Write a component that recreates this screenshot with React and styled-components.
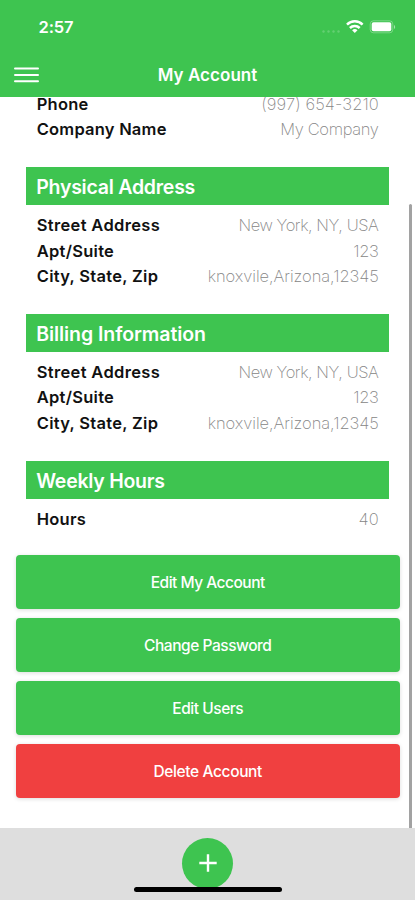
import React from "react";
import styled, { createGlobalStyle } from "styled-components";

const GREEN = "#3ec450";
const RED = "#f04040";

const GlobalStyle = createGlobalStyle`
  * { box-sizing: border-box; }
  body {
    margin: 0;
    background: #fff;
    font-family: Inter, "Liberation Sans", sans-serif;
  }
`;

const Screen = styled.div`
  display: flex;
  flex-direction: column;
  width: 415px;
  height: 900px;
  overflow: hidden;
  background: #fff;
`;

const Header = styled.header`
  flex: none;
  height: 97px;
  background: ${GREEN};
  color: #fff;
  z-index: 1;
`;

const StatusBar = styled.div`
  display: flex;
  align-items: center;
  justify-content: space-between;
  height: 52px;
  padding: 2px 19px 0 38.5px;
`;

const Time = styled.span`
  font-size: 16.5px;
  font-weight: 600;
  letter-spacing: -0.1px;
`;

const StatusIcons = styled.div`
  display: flex;
  align-items: center;
`;

const NavBar = styled.div`
  display: grid;
  grid-template-columns: 54px 1fr 54px;
  align-items: center;
  height: 45px;
`;

const MenuButton = styled.button`
  display: flex;
  padding: 0 0 0 14px;
  border: 0;
  background: none;
`;

const Title = styled.h1`
  margin: 0;
  text-align: center;
  font-size: 17px;
  font-weight: 600;
  line-height: 24px;
  letter-spacing: 0.05px;
`;

const Viewport = styled.main`
  flex: 1;
  min-height: 0;
  display: flex;
  overflow: hidden;
`;

const Content = styled.div`
  flex: 1;
  margin-top: -6.1px;
  padding-left: 15.5px;
  padding-right: 9px;
`;

const ScrollThumb = styled.div`
  flex: none;
  width: 3px;
  margin: 107px 3px 0 0;
  border-radius: 2px 2px 0 0;
  background: #a2a2a2;
`;

const Section = styled.section`
  margin: 0 10.7px 25.4px;
`;

const SectionTitle = styled.h2`
  display: flex;
  align-items: center;
  height: 37.5px;
  margin: 0 0 7.5px;
  padding: 2px 10px 0;
  background: ${GREEN};
  color: #fff;
  font-size: 19.5px;
  font-weight: 600;
  letter-spacing: ${(p) => p.$track}px;
`;

const Row = styled.div`
  display: flex;
  align-items: center;
  justify-content: space-between;
  height: 25.5px;
  padding: 0 10.5px;
  white-space: nowrap;
`;

const Label = styled.span`
  color: #111;
  font-size: 16.5px;
  font-weight: 600;
  letter-spacing: ${(p) => p.$track}px;
`;

const Value = styled.span`
  color: #868686;
  font-size: 16.5px;
  font-weight: 200;
  letter-spacing: ${(p) => p.$track}px;
  margin-right: ${(p) => -p.$track}px;
`;

const Actions = styled.div`
  display: flex;
  flex-direction: column;
  gap: 9.2px;
  margin-top: -1.8px;
`;

const ActionButton = styled.button`
  height: 53.8px;
  padding: 0;
  border: 0;
  border-radius: 4px;
  background: ${(p) => (p.$danger ? RED : GREEN)};
  box-shadow: 0 1px 4px rgba(0, 0, 0, 0.14);
  color: #fff;
  font-family: inherit;
  font-size: 15.5px;
  font-weight: 500;
  letter-spacing: ${(p) => p.$track}px;
`;

const Footer = styled.footer`
  flex: none;
  display: flex;
  flex-direction: column;
  align-items: center;
  height: 72px;
  padding-top: 9.5px;
  background: #dedede;
`;

const AddButton = styled.button`
  display: flex;
  align-items: center;
  justify-content: center;
  width: 51px;
  height: 51px;
  padding: 0;
  border: 0;
  border-radius: 50%;
  background: ${GREEN};
`;

const HomeIndicator = styled.div`
  width: 148px;
  height: 5px;
  margin-top: -2px;
  border-radius: 3px;
  background: #000;
  z-index: 1;
`;

const addressRows = [
  ["Street Address", "New York, NY, USA", 0.34, -0.45],
  ["Apt/Suite", "123", 0.28, -0.4],
  ["City, State, Zip", "knoxvile,Arizona,12345", 0.3, -0.06],
];

const sections = [
  {
    rows: [
      ["Phone", "(997) 654-3210", 0.25, 0.1],
      ["Company Name", "My Company", 0.22, -0.35],
    ],
  },
  { title: "Physical Address", track: -0.24, rows: addressRows },
  { title: "Billing Information", track: -0.07, rows: addressRows },
  { title: "Weekly Hours", track: -0.25, rows: [["Hours", "40", 0.25, 0.3]] },
];

const actions = [
  { text: "Edit My Account", track: -0.5 },
  { text: "Change Password", track: -0.45 },
  { text: "Edit Users", track: -0.45 },
  { text: "Delete Account", track: -0.38, danger: true },
];

function StatusGlyphs() {
  return (
    <StatusIcons>
      <svg width="76" height="16" viewBox="320 19 76 16" fill="none">
        <g fill="#fff" fillOpacity="0.2">
          <circle cx="323.5" cy="31.5" r="1.2" />
          <circle cx="328.5" cy="31.5" r="1.2" />
          <circle cx="333.5" cy="31.5" r="1.2" />
          <circle cx="338.5" cy="31.5" r="1.2" />
        </g>
        <g stroke="#fff" strokeWidth="2.5">
          <path d="M347 24.6a11 11 0 0 1 15.6 0" />
          <path d="M349.9 28a7 7 0 0 1 9.8 0" />
        </g>
        <path d="M354.8 33l-2.7-2.8a4 4 0 0 1 5.4 0z" fill="#fff" />
        <rect x="370.2" y="20.8" width="22.6" height="12" rx="3.2" stroke="#fff" strokeOpacity="0.3" />
        <rect x="371.7" y="22.3" width="19.6" height="9" rx="1.8" fill="#fff" />
        <path d="M394 25a2.3 2.3 0 0 1 0 4z" fill="#fff" fillOpacity="0.5" />
      </svg>
    </StatusIcons>
  );
}

export default function App() {
  return (
    <>
      <GlobalStyle />
      <Screen>
        <Header>
          <StatusBar>
            <Time>2:57</Time>
            <StatusGlyphs />
          </StatusBar>
          <NavBar>
            <MenuButton aria-label="Menu">
              <svg width="25" height="16" viewBox="0 0 25 16" fill="#fff">
                <rect y="0.4" width="25" height="2.1" rx="1" />
                <rect y="6.9" width="25" height="2.1" rx="1" />
                <rect y="13.2" width="25" height="2.1" rx="1" />
              </svg>
            </MenuButton>
            <Title>My Account</Title>
          </NavBar>
        </Header>
        <Viewport>
          <Content>
            {sections.map((s, i) => (
              <Section key={i}>
                {s.title && <SectionTitle $track={s.track}>{s.title}</SectionTitle>}
                {s.rows.map(([label, value, labelTrack, valueTrack]) => (
                  <Row key={label}>
                    <Label $track={labelTrack}>{label}</Label>
                    <Value $track={valueTrack}>{value}</Value>
                  </Row>
                ))}
              </Section>
            ))}
            <Actions>
              {actions.map((a) => (
                <ActionButton key={a.text} $track={a.track} $danger={a.danger}>
                  {a.text}
                </ActionButton>
              ))}
            </Actions>
          </Content>
          <ScrollThumb />
        </Viewport>
        <Footer>
          <AddButton aria-label="Add">
            <svg width="18" height="18" viewBox="0 0 18 18" stroke="#fff" strokeWidth="2.4">
              <path d="M9 0.3v17.4M0.3 9h17.4" />
            </svg>
          </AddButton>
          <HomeIndicator />
        </Footer>
      </Screen>
    </>
  );
}
